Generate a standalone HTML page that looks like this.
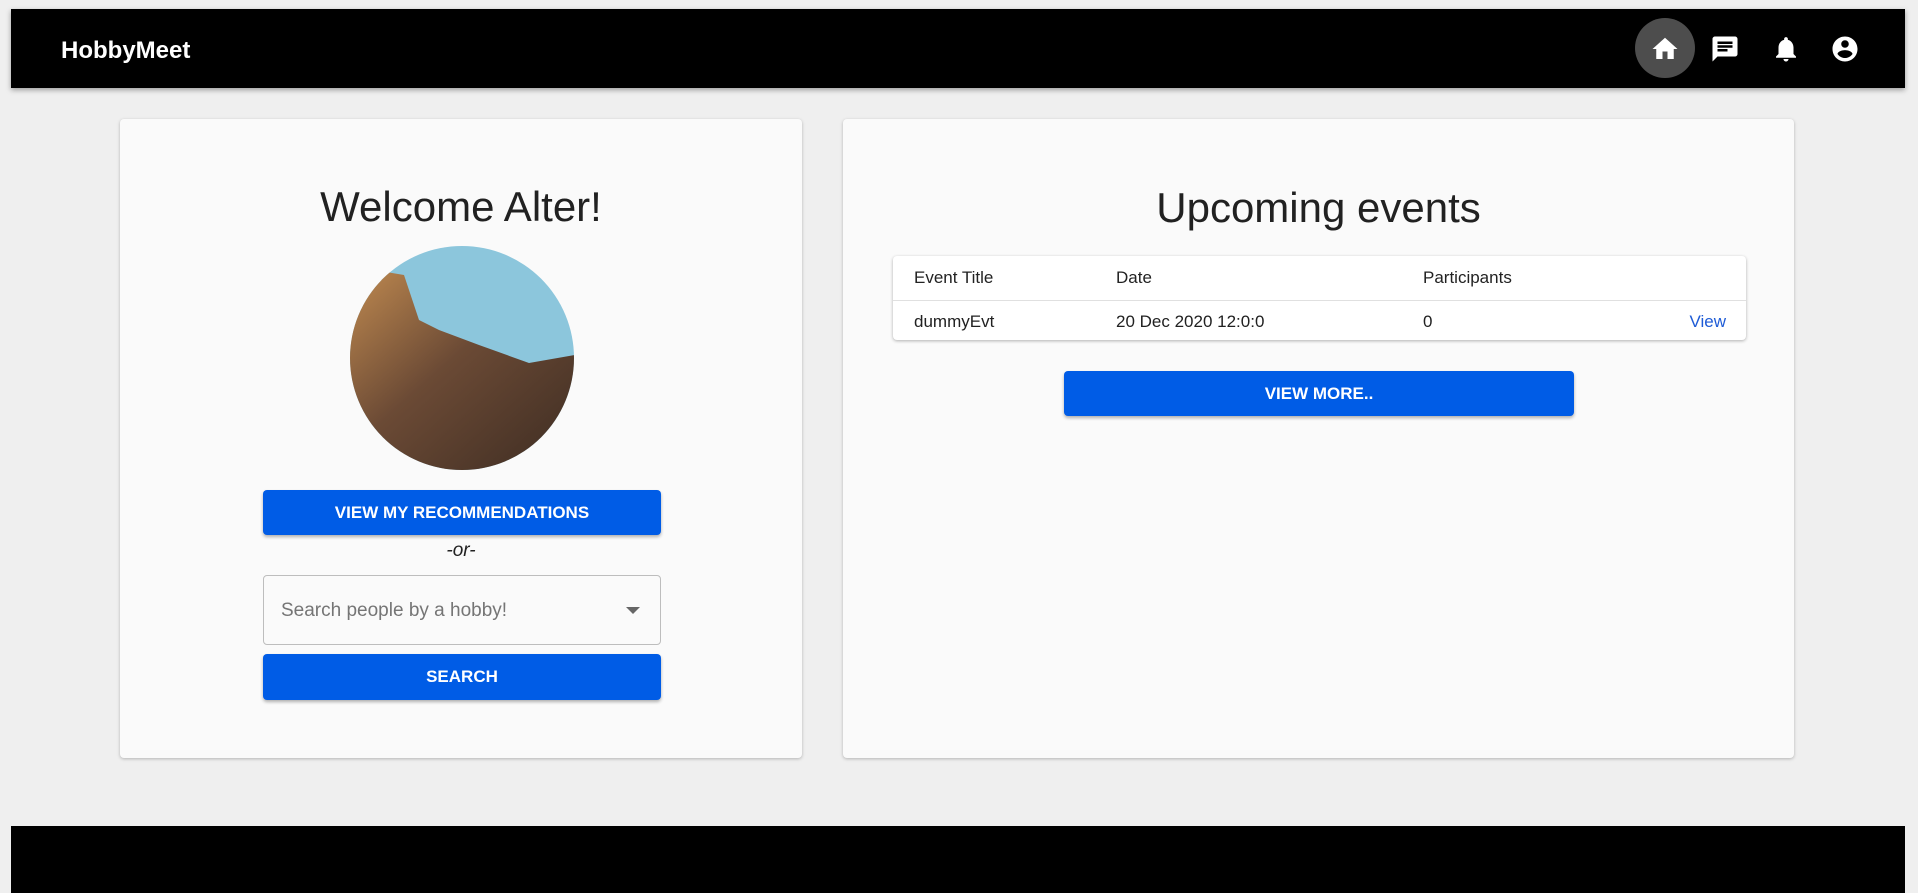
<!DOCTYPE html>
<html><head><meta charset="utf-8"><style>
*{box-sizing:border-box;margin:0;padding:0}
body{width:1918px;height:893px;background:#efefef;font-family:"Liberation Sans",Roboto,sans-serif;position:relative;overflow:hidden;color:#212121}
.hdr{position:absolute;left:11px;top:9px;width:1894px;height:79px;background:#000;box-shadow:0 2px 5px rgba(0,0,0,.35)}
.logo{position:absolute;left:50px;top:28px;color:#fff;font-size:24px;font-weight:bold}
.ic{position:absolute;top:25px;width:30px;height:30px}
.hc{position:absolute;left:1624px;top:9px;width:60px;height:60px;border-radius:50%;background:#4d4d4d}
.card{position:absolute;top:119px;height:639px;background:#fafafa;border-radius:4px;box-shadow:0 1px 3px rgba(0,0,0,.25)}
.btn{position:absolute;background:#005ce6;color:#fff;font-weight:bold;font-size:17px;text-align:center;border-radius:4px;box-shadow:0 2px 3px rgba(0,0,0,.3)}
.ttl{position:absolute;width:100%;text-align:center;font-size:42px;color:#212121}
.tbl{position:absolute;left:50px;top:137px;width:853px;height:84px;background:#fff;border-radius:4px;box-shadow:0 1px 3px rgba(0,0,0,.3);font-size:17px}
.tbl span{position:absolute}
</style></head><body>
<div class="hdr">
<div class="logo">HobbyMeet</div>
<div class="hc"></div>
<svg class="ic" style="left:1639px" viewBox="0 0 24 24"><path fill="#fff" d="M10 20v-6h4v6h5v-8h3L12 3 2 12h3v8z"/></svg>
<svg class="ic" style="left:1699px" viewBox="0 0 24 24"><path fill="#fff" d="M20 2H4c-1.1 0-2 .9-2 2v18l4-4h14c1.1 0 2-.9 2-2V4c0-1.1-.9-2-2-2zM6 9h12v2H6V9zm8 5H6v-2h8v2zm4-6H6V6h12v2z"/></svg>
<svg class="ic" style="left:1760px" viewBox="0 0 24 24"><path fill="#fff" d="M12 22c1.1 0 2-.9 2-2h-4c0 1.1.9 2 2 2zm6-6v-5c0-3.070-1.63-5.64-4.5-6.32V4c0-.83-.67-1.5-1.5-1.5s-1.5.67-1.5 1.5v.68C7.640 5.36 6 7.92 6 11v5l-2 2v1h16v-1l-2-2z"/></svg>
<svg class="ic" style="left:1819px" viewBox="0 0 24 24"><path fill="#fff" d="M12 2C6.48 2 2 6.48 2 12s4.48 10 10 10 10-4.48 10-10S17.52 2 12 2zm0 3c1.66 0 3 1.34 3 3s-1.34 3-3 3-3-1.34-3-3 1.34-3 3-3zm0 14.2c-2.5 0-4.71-1.28-6-3.22.03-1.99 4-3.08 6-3.08 1.99 0 5.97 1.090 6 3.08-1.29 1.94-3.5 3.22-6 3.22z"/></svg>
</div>

<div class="card" style="left:120px;width:682px">
<div class="ttl" style="top:64px">Welcome Alter!</div>
<svg style="position:absolute;left:229px;top:126px" width="226" height="226" viewBox="0 0 226 226">
<defs><clipPath id="c"><circle cx="113" cy="113" r="112"/></clipPath><linearGradient id="g" x1="0" y1="0" x2="1" y2="1"><stop offset="0" stop-color="#c08a50"/><stop offset=".45" stop-color="#6b4a35"/><stop offset="1" stop-color="#3d2c22"/></linearGradient></defs>
<g clip-path="url(#c)"><rect width="226" height="226" fill="#8cc6dc"/>
<path d="M0 40 L25 25 L55 30 L70 75 L90 85 L130 100 L180 118 L226 110 L226 226 L0 226Z" fill="url(#g)"/></g></svg>
<div class="btn" style="left:143px;top:371px;width:398px;height:45px;line-height:45px">VIEW MY RECOMMENDATIONS</div>
<div style="position:absolute;left:0;width:100%;top:421px;text-align:center;font-style:italic;font-size:19px">-or-</div>
<div style="position:absolute;left:143px;top:456px;width:398px;height:70px;border:1px solid #bdbdbd;border-radius:4px;background:#fafafa">
<span style="position:absolute;left:17px;top:24px;font-size:19px;color:#757575">Search people by a hobby!</span>
<span style="position:absolute;right:20px;top:31px;border-left:7px solid transparent;border-right:7px solid transparent;border-top:7px solid #666"></span></div>
<div class="btn" style="left:143px;top:535px;width:398px;height:46px;line-height:46px">SEARCH</div>
</div>

<div class="card" style="left:843px;width:951px">
<div class="ttl" style="top:65px">Upcoming events</div>
<div class="tbl">
<div style="position:absolute;left:0;right:0;top:44px;border-top:1px solid #e0e0e0"></div>
<span style="left:21px;top:12px;color:#222">Event Title</span>
<span style="left:223px;top:12px;color:#222">Date</span>
<span style="left:530px;top:12px;color:#222">Participants</span>
<span style="left:21px;top:56px">dummyEvt</span>
<span style="left:223px;top:56px">20 Dec 2020 12:0:0</span>
<span style="left:530px;top:56px">0</span>
<span style="right:20px;top:56px;color:#1e5bd6">View</span>
</div>
<div class="btn" style="left:221px;top:252px;width:510px;height:45px;line-height:45px">VIEW MORE..</div>
</div>

<div style="position:absolute;left:11px;top:826px;width:1894px;height:67px;background:#000"></div>
</body></html>
